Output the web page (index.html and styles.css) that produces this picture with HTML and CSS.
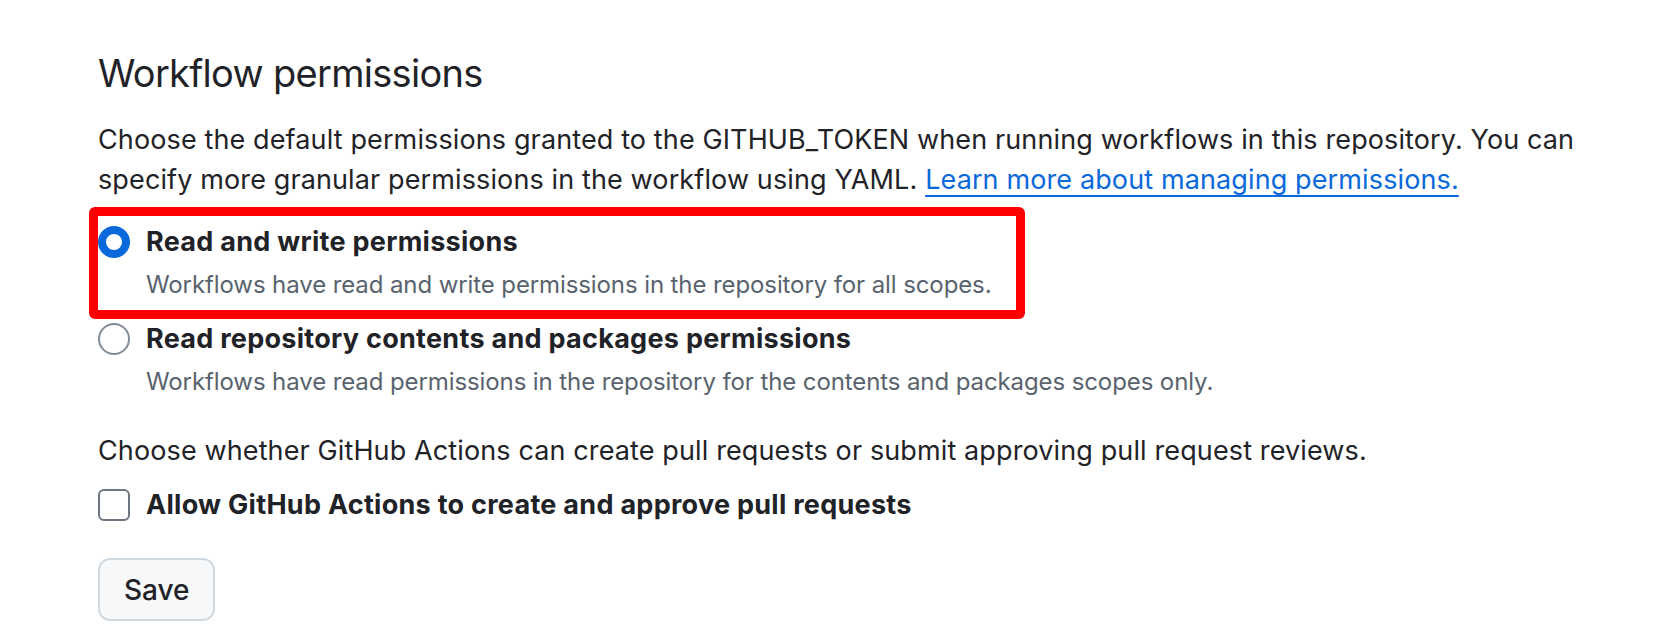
FILE: index.html
```html
<!DOCTYPE html>
<html lang="en">
<head>
<meta charset="utf-8">
<title>Workflow permissions</title>
<link rel="stylesheet" href="styles.css">
</head>
<body>
<main class="page">
  <h2 class="heading">Workflow permissions</h2>
  <p class="intro">Choose the default permissions granted to the GITHUB_TOKEN when running workflows in this repository. You can specify more granular permissions in the workflow using YAML. <a class="link" href="#">Learn more about managing permissions.</a></p>

  <div class="option option-first">
    <span class="radio radio-checked"></span>
    <div class="option-text">
      <div class="option-label">Read and write permissions</div>
      <div class="option-note">Workflows have read and write permissions in the repository for all scopes.</div>
    </div>
  </div>

  <div class="option option-second">
    <span class="radio"></span>
    <div class="option-text">
      <div class="option-label">Read repository contents and packages permissions</div>
      <div class="option-note">Workflows have read permissions in the repository for the contents and packages scopes only.</div>
    </div>
  </div>

  <p class="intro intro-second">Choose whether GitHub Actions can create pull requests or submit approving pull request reviews.</p>

  <div class="check-row">
    <span class="checkbox"></span>
    <span class="option-label">Allow GitHub Actions to create and approve pull requests</span>
  </div>

  <button class="btn" type="button">Save</button>

  <div class="annotation"></div>
</main>
</body>
</html>
```

FILE: styles.css
```css
html, body {
  margin: 0;
  padding: 0;
  background: #ffffff;
}

body {
  font-family: Inter, "Liberation Sans", sans-serif;
  color: #1f2328;
}

.page {
  position: relative;
  padding: 49px 40px 0 98px;
}

.heading {
  margin: 0;
  font-size: 38px;
  font-weight: 400;
  line-height: 48px;
  letter-spacing: -0.7px;
}

.intro {
  margin: 23px 0 0;
  font-size: 27px;
  line-height: 40px;
  letter-spacing: 0.12px;
}

.link {
  color: #0969da;
  text-decoration: underline;
  text-decoration-thickness: 2px;
  text-underline-offset: 6px;
}

.option {
  display: flex;
  align-items: flex-start;
  gap: 16px;
}

.option-first {
  margin-top: 22px;
}

.option-second {
  margin-top: 17px;
}

.radio {
  flex: none;
  box-sizing: border-box;
  width: 32px;
  height: 32px;
  margin-top: 4px;
  border-radius: 50%;
  border: 2px solid #818b98;
  background: #ffffff;
}

.radio-checked {
  border: 8px solid #0969da;
}

.option-label {
  font-size: 27px;
  font-weight: 700;
  line-height: 40px;
  letter-spacing: 0.28px;
}

.option-note {
  margin-top: 6px;
  font-size: 24px;
  line-height: 34px;
  letter-spacing: -0.1px;
  color: #59636e;
}

.intro-second {
  margin-top: 32px;
}

.check-row {
  display: flex;
  align-items: center;
  gap: 16px;
  margin-top: 14px;
}

.checkbox {
  flex: none;
  box-sizing: border-box;
  width: 32px;
  height: 32px;
  border: 2px solid #6e7781;
  border-radius: 6px;
  background: #ffffff;
}

.btn {
  display: block;
  box-sizing: border-box;
  height: 63px;
  margin-top: 33px;
  padding: 0 23px 0 24px;
  font-family: Inter, "Liberation Sans", sans-serif;
  font-size: 28px;
  font-weight: 500;
  color: #1f2328;
  background: #f6f8fa;
  border: 2px solid #d1d9e0;
  border-radius: 12px;
}

.annotation {
  position: absolute;
  left: 89px;
  top: 207px;
  box-sizing: border-box;
  width: 936px;
  height: 112px;
  border: 9px solid #ff0000;
  border-radius: 6px;
  pointer-events: none;
}
```
